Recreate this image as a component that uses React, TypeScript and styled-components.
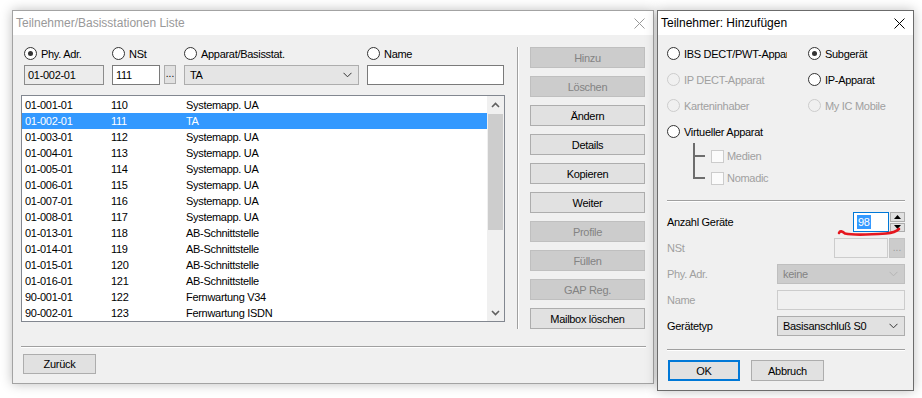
import React from 'react';
import styled, { createGlobalStyle, css } from 'styled-components';

const GlobalStyle = createGlobalStyle`
  html, body {
    margin: 0;
    padding: 0;
    background: #ffffff;
  }
  body {
    font-family: 'Liberation Sans', Arial, sans-serif;
    font-size: 11px;
    letter-spacing: -0.3px;
    color: #000;
  }
  * {
    box-sizing: border-box;
  }
`;

const Desktop = styled.div`
  display: flex;
  align-items: flex-start;
  gap: 3px;
  padding: 10px 0 0 12px;
  width: 922px;
  height: 398px;
  overflow: hidden;
`;

const Window = styled.div<{ $w: number; $h: number; $active?: boolean }>`
  position: relative;
  flex-shrink: 0;
  width: ${(p) => p.$w}px;
  height: ${(p) => p.$h}px;
  display: flex;
  flex-direction: column;
  background: #f0f0f0;
  border: 1px solid ${(p) => (p.$active ? '#6b6b6b' : '#a3a3a3')};
  box-shadow: 0 0 11px rgba(0, 0, 0, 0.26);
`;

const TitleBar = styled.div<{ $active?: boolean }>`
  height: 24px;
  flex-shrink: 0;
  background: #fff;
  display: flex;
  align-items: center;
  justify-content: space-between;
  padding: 0 8px 0 3px;
  font-size: 12px;
  letter-spacing: 0;
  color: ${(p) => (p.$active ? '#000' : '#999')};
  svg {
    stroke: ${(p) => (p.$active ? '#000' : '#999')};
  }
`;

const CloseIcon = () => (
  <svg width="11" height="11" viewBox="0 0 11 11">
    <path d="M0.5 0.5 L10.5 10.5 M10.5 0.5 L0.5 10.5" strokeWidth="1" fill="none" />
  </svg>
);

const Chevron = ({ color = '#333' }: { color?: string }) => (
  <svg width="9" height="6" viewBox="0 0 9 6">
    <path d="M0.5 0.8 L4.5 4.8 L8.5 0.8" stroke={color} strokeWidth="1" fill="none" />
  </svg>
);

/* ---------- common controls ---------- */

const RadioOpt = styled.div<{ $disabled?: boolean; $clip?: number }>`
  display: flex;
  align-items: center;
  gap: 4px;
  height: 13px;
  white-space: nowrap;
  overflow: hidden;
  color: ${(p) => (p.$disabled ? '#a0a0a0' : '#000')};
  ${(p) =>
    p.$clip &&
    css`
      width: ${p.$clip}px;
    `}
`;

const RadioDot = styled.span<{ $checked?: boolean; $disabled?: boolean }>`
  width: 13px;
  height: 13px;
  flex-shrink: 0;
  border-radius: 50%;
  border: 1px solid ${(p) => (p.$disabled ? '#cccccc' : '#333333')};
  background: ${(p) => (p.$disabled ? '#f0f0f0' : '#fff')};
  display: flex;
  align-items: center;
  justify-content: center;
  &::after {
    content: '';
    width: 5px;
    height: 5px;
    border-radius: 50%;
    background: #333;
    display: ${(p) => (p.$checked ? 'block' : 'none')};
  }
`;

const Radio = ({
  label,
  checked,
  disabled,
  clip,
}: {
  label: string;
  checked?: boolean;
  disabled?: boolean;
  clip?: number;
}) => (
  <RadioOpt $disabled={disabled} $clip={clip}>
    <RadioDot $checked={checked} $disabled={disabled} />
    <span>{label}</span>
  </RadioOpt>
);

type FieldKind = 'normal' | 'readonly' | 'disabled' | 'focus';

const fieldBorder: Record<FieldKind, string> = {
  normal: '#7a7a7a',
  readonly: '#8c8c8c',
  disabled: '#cccccc',
  focus: '#0078d7',
};

const fieldBg: Record<FieldKind, string> = {
  normal: '#ffffff',
  readonly: '#ececec',
  disabled: '#f0f0f0',
  focus: '#ffffff',
};

const Field = styled.div<{ $kind?: FieldKind; $w?: number }>`
  height: 20px;
  width: ${(p) => (p.$w ? `${p.$w}px` : '100%')};
  flex-shrink: 0;
  display: flex;
  align-items: center;
  padding: 0 3px;
  border: 1px solid ${(p) => fieldBorder[p.$kind || 'normal']};
  background: ${(p) => fieldBg[p.$kind || 'normal']};
  white-space: nowrap;
`;

const Combo = styled.div<{ $disabled?: boolean; $bg?: string }>`
  height: 20px;
  width: 100%;
  display: flex;
  align-items: center;
  justify-content: space-between;
  padding: 0 6px 0 5px;
  border: 1px solid ${(p) => (p.$disabled ? '#bfbfbf' : '#adadad')};
  background: ${(p) => (p.$disabled ? '#cccccc' : p.$bg || '#e1e1e1')};
  color: ${(p) => (p.$disabled ? '#838383' : '#000')};
`;

const Btn = styled.button<{ $disabled?: boolean; $default?: boolean; $w?: number; $h?: number }>`
  font: inherit;
  letter-spacing: inherit;
  margin: 0;
  padding: 0;
  width: ${(p) => (p.$w ? `${p.$w}px` : '100%')};
  height: ${(p) => p.$h || 21}px;
  flex-shrink: 0;
  display: flex;
  align-items: center;
  justify-content: center;
  background: ${(p) => (p.$disabled ? '#cccccc' : '#e1e1e1')};
  border: 1px solid ${(p) => (p.$disabled ? '#bfbfbf' : '#adadad')};
  color: ${(p) => (p.$disabled ? '#838383' : '#000')};
  ${(p) =>
    p.$default &&
    css`
      border: 2px solid #0078d7;
    `}
`;

const HSep = styled.div<{ $mt: number }>`
  height: 2px;
  margin-top: ${(p) => p.$mt}px;
  border-top: 1px solid #a0a0a0;
  border-bottom: 1px solid #ffffff;
`;

/* ---------- left window ---------- */

const LeftBody = styled.div`
  flex: 1;
  display: flex;
  flex-direction: column;
  padding: 12px 7px 0 8px;
`;

const TopArea = styled.div`
  display: flex;
  height: 282px;
`;

const FilterCol = styled.div`
  width: 484px;
  display: flex;
  flex-direction: column;
`;

const FilterGrid = styled.div`
  display: grid;
  grid-template-columns: 80px 64px 175px 137px;
  grid-template-rows: 13px 20px;
  column-gap: 8px;
  row-gap: 5px;
  padding-left: 3px;
`;

const NstGroup = styled.div`
  display: flex;
  gap: 4px;
`;

const DotsBtn = styled.div<{ $disabled?: boolean }>`
  width: ${(p) => (p.$disabled ? 16 : 12)}px;
  height: ${(p) => (p.$disabled ? 20 : 19)}px;
  display: flex;
  align-items: flex-end;
  justify-content: center;
  padding-bottom: 4px;
  font-size: 10px;
  letter-spacing: 0;
  border: 1px solid ${(p) => (p.$disabled ? '#c4c4c4' : '#adadad')};
  background: ${(p) => (p.$disabled ? '#cccccc' : '#e1e1e1')};
  color: ${(p) => (p.$disabled ? '#9a9a9a' : '#000')};
`;

const ListBox = styled.div`
  margin-top: 10px;
  height: 227px;
  display: flex;
  border: 1px solid #828790;
  background: #fff;
`;

const Rows = styled.div`
  flex: 1;
  padding-top: 1px;
`;

const Row = styled.div<{ $selected?: boolean }>`
  height: 16px;
  display: flex;
  align-items: center;
  padding-left: 3px;
  white-space: nowrap;
  background: ${(p) => (p.$selected ? '#3399ff' : 'transparent')};
  color: ${(p) => (p.$selected ? '#fff' : '#000')};
`;

const Cell = styled.span<{ $w?: number }>`
  width: ${(p) => (p.$w ? `${p.$w}px` : 'auto')};
  flex-shrink: 0;
`;

const ScrollBar = styled.div`
  width: 17px;
  display: flex;
  flex-direction: column;
  background: #f0f0f0;
`;

const ScrollArrow = styled.div`
  height: 17px;
  display: flex;
  align-items: center;
  justify-content: center;
`;

const ScrollTrack = styled.div`
  flex: 1;
  padding: 1px 1px 0 1px;
`;

const ScrollThumb = styled.div`
  height: 116px;
  background: #cdcdcd;
`;

const VSep = styled.div`
  width: 2px;
  margin: 0 11px 0 12px;
  border-left: 1px solid #a0a0a0;
  border-right: 1px solid #ffffff;
`;

const ButtonCol = styled.div`
  width: 115px;
  display: flex;
  flex-direction: column;
  gap: 8px;
`;

const BottomBar = styled.div`
  padding: 6px 0 0 2px;
`;

/* ---------- right window ---------- */

const RightBody = styled.div`
  flex: 1;
  display: flex;
  flex-direction: column;
  padding: 12px 8px 0 9px;
`;

const RadioGrid = styled.div`
  display: grid;
  grid-template-columns: 141px 1fr;
  grid-auto-rows: 13px;
  row-gap: 13px;
`;

const Tree = styled.div`
  position: relative;
  margin: 5px 0 0 26px;
  padding-top: 2px;
  &::before {
    content: '';
    position: absolute;
    left: 0;
    top: 0;
    width: 2px;
    height: 36px;
    background: #6d6d6d;
  }
`;

const TreeRow = styled.div`
  height: 22px;
  display: flex;
  align-items: center;
  color: #a0a0a0;
`;

const Connector = styled.span`
  width: 12px;
  height: 2px;
  background: #6d6d6d;
  margin-right: 6px;
`;

const CheckBox = styled.span`
  width: 13px;
  height: 13px;
  margin-right: 3px;
  border: 1px solid #cccccc;
  background: #fbfbfb;
`;

const FormGrid = styled.div`
  margin-top: 10px;
  display: grid;
  grid-template-columns: 110px 1fr;
  grid-auto-rows: 20px;
  row-gap: 6px;
`;

const FormLabel = styled.div<{ $disabled?: boolean }>`
  display: flex;
  align-items: center;
  color: ${(p) => (p.$disabled ? '#a0a0a0' : '#000')};
`;

const RightAligned = styled.div`
  position: relative;
  display: flex;
  justify-content: flex-end;
  gap: 1px;
`;

const Selected = styled.span`
  background: #3399ff;
  color: #fff;
  line-height: 14px;
  padding: 0 1px;
`;

const Spinner = styled.div`
  width: 15px;
  display: flex;
  flex-direction: column;
  gap: 1px;
`;

const SpinBtn = styled.div`
  height: 9.5px;
  display: flex;
  align-items: center;
  justify-content: center;
  border: 1px solid #adadad;
  background: #e1e1e1;
`;

const Squiggle = styled.svg`
  position: absolute;
  left: 59px;
  top: 14px;
  overflow: visible;
  pointer-events: none;
`;

const DialogButtons = styled.div`
  display: flex;
  gap: 11px;
  padding: 9px 0 0 1px;
`;

const rows: [string, string, string][] = [
  ['01-001-01', '110', 'Systemapp. UA'],
  ['01-002-01', '111', 'TA'],
  ['01-003-01', '112', 'Systemapp. UA'],
  ['01-004-01', '113', 'Systemapp. UA'],
  ['01-005-01', '114', 'Systemapp. UA'],
  ['01-006-01', '115', 'Systemapp. UA'],
  ['01-007-01', '116', 'Systemapp. UA'],
  ['01-008-01', '117', 'Systemapp. UA'],
  ['01-013-01', '118', 'AB-Schnittstelle'],
  ['01-014-01', '119', 'AB-Schnittstelle'],
  ['01-015-01', '120', 'AB-Schnittstelle'],
  ['01-016-01', '121', 'AB-Schnittstelle'],
  ['90-001-01', '122', 'Fernwartung V34'],
  ['90-002-01', '123', 'Fernwartung ISDN'],
];

const sideButtons: { label: string; disabled?: boolean }[] = [
  { label: 'Hinzu', disabled: true },
  { label: 'Löschen', disabled: true },
  { label: 'Ändern' },
  { label: 'Details' },
  { label: 'Kopieren' },
  { label: 'Weiter' },
  { label: 'Profile', disabled: true },
  { label: 'Füllen', disabled: true },
  { label: 'GAP Reg.', disabled: true },
  { label: 'Mailbox löschen' },
];

export default function App(): JSX.Element {
  return (
    <>
      <GlobalStyle />
      <Desktop>
        <Window $w={642} $h={374}>
          <TitleBar>
            <span>Teilnehmer/Basisstationen Liste</span>
            <CloseIcon />
          </TitleBar>
          <LeftBody>
            <TopArea>
              <FilterCol>
                <FilterGrid>
                  <Radio label="Phy. Adr." checked />
                  <Radio label="NSt" />
                  <Radio label="Apparat/Basisstat." />
                  <Radio label="Name" />
                  <Field $kind="readonly">01-002-01</Field>
                  <NstGroup>
                    <Field $w={48}>111</Field>
                    <DotsBtn>...</DotsBtn>
                  </NstGroup>
                  <Combo $bg="#e5e5e5">
                    <span>TA</span>
                    <Chevron />
                  </Combo>
                  <Field />
                </FilterGrid>
                <ListBox>
                  <Rows>
                    {rows.map(([adr, nst, name], i) => (
                      <Row key={adr} $selected={i === 1}>
                        <Cell $w={86}>{adr}</Cell>
                        <Cell $w={75}>{nst}</Cell>
                        <Cell>{name}</Cell>
                      </Row>
                    ))}
                  </Rows>
                  <ScrollBar>
                    <ScrollArrow>
                      <svg width="9" height="6" viewBox="0 0 9 6">
                        <path d="M1 5 L4.5 1.5 L8 5" stroke="#606060" strokeWidth="1.6" fill="none" />
                      </svg>
                    </ScrollArrow>
                    <ScrollTrack>
                      <ScrollThumb />
                    </ScrollTrack>
                    <ScrollArrow>
                      <svg width="9" height="6" viewBox="0 0 9 6">
                        <path d="M1 1 L4.5 4.5 L8 1" stroke="#606060" strokeWidth="1.6" fill="none" />
                      </svg>
                    </ScrollArrow>
                  </ScrollBar>
                </ListBox>
              </FilterCol>
              <VSep />
              <ButtonCol>
                {sideButtons.map((b) => (
                  <Btn key={b.label} $disabled={b.disabled}>
                    {b.label}
                  </Btn>
                ))}
              </ButtonCol>
            </TopArea>
            <HSep $mt={17} />
            <BottomBar>
              <Btn $w={73} $h={20}>
                Zurück
              </Btn>
            </BottomBar>
          </LeftBody>
        </Window>

        <Window $w={257} $h={381} $active>
          <TitleBar $active>
            <span>Teilnehmer: Hinzufügen</span>
            <CloseIcon />
          </TitleBar>
          <RightBody>
            <RadioGrid>
              <Radio label="IBS DECT/PWT-Apparat" clip={120} />
              <Radio label="Subgerät" checked />
              <Radio label="IP DECT-Apparat" disabled />
              <Radio label="IP-Apparat" />
              <Radio label="Karteninhaber" disabled />
              <Radio label="My IC Mobile" disabled />
              <Radio label="Virtueller Apparat" />
            </RadioGrid>
            <Tree>
              <TreeRow>
                <Connector />
                <CheckBox />
                <span>Medien</span>
              </TreeRow>
              <TreeRow>
                <Connector />
                <CheckBox />
                <span>Nomadic</span>
              </TreeRow>
            </Tree>
            <HSep $mt={11} />
            <FormGrid>
              <FormLabel>Anzahl Geräte</FormLabel>
              <RightAligned>
                <Field $kind="focus" $w={36}>
                  <Selected>98</Selected>
                </Field>
                <Spinner>
                  <SpinBtn>
                    <svg width="7" height="4" viewBox="0 0 7 4">
                      <path d="M0 4 L3.5 0 L7 4 Z" fill="#000" />
                    </svg>
                  </SpinBtn>
                  <SpinBtn>
                    <svg width="7" height="4" viewBox="0 0 7 4">
                      <path d="M0 0 L3.5 4 L7 0 Z" fill="#000" />
                    </svg>
                  </SpinBtn>
                </Spinner>
                <Squiggle width="66" height="12" viewBox="0 0 66 12">
                  <path
                    d="M3 7 C4 4.5 6 5 9 7.5 C18 9.5 36 8.5 50 7.5 C56 7 60 6 63 3"
                    stroke="#e5171f"
                    strokeWidth="2.6"
                    strokeLinecap="round"
                    fill="none"
                  />
                </Squiggle>
              </RightAligned>
              <FormLabel $disabled>NSt</FormLabel>
              <RightAligned>
                <Field $kind="disabled" $w={54} />
                <DotsBtn $disabled>...</DotsBtn>
              </RightAligned>
              <FormLabel $disabled>Phy. Adr.</FormLabel>
              <Combo $disabled>
                <span>keine</span>
                <Chevron color="#b4b4b4" />
              </Combo>
              <FormLabel $disabled>Name</FormLabel>
              <Field $kind="disabled" />
              <FormLabel>Gerätetyp</FormLabel>
              <Combo>
                <span>Basisanschluß S0</span>
                <Chevron />
              </Combo>
            </FormGrid>
            <HSep $mt={13} />
            <DialogButtons>
              <Btn $default $w={72}>
                OK
              </Btn>
              <Btn $w={73}>Abbruch</Btn>
            </DialogButtons>
          </RightBody>
        </Window>
      </Desktop>
    </>
  );
}
